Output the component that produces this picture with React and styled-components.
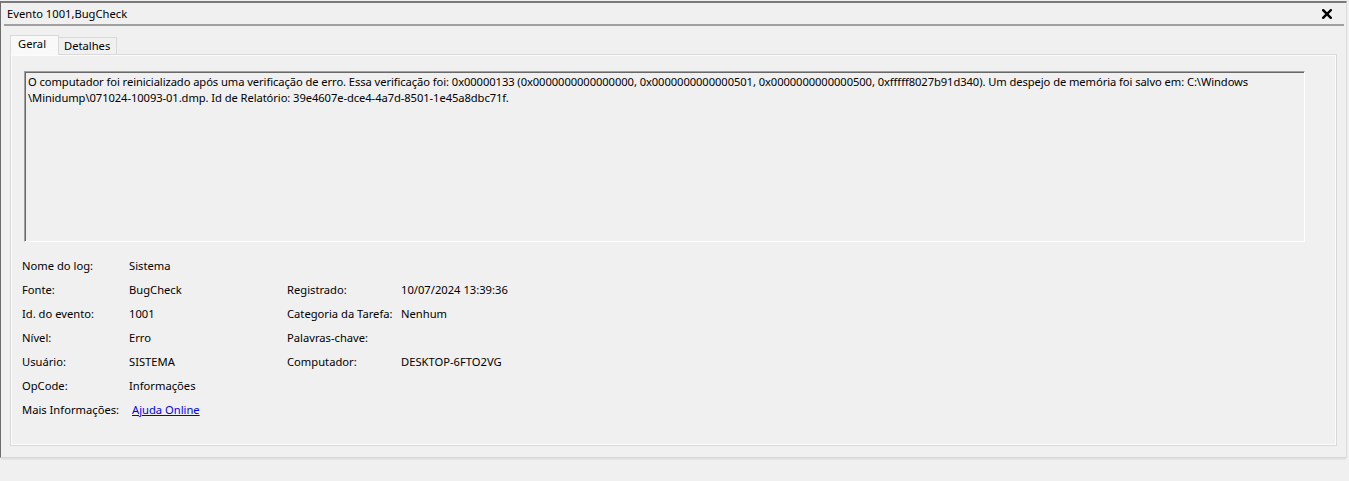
import React from "react";
import styled, { createGlobalStyle } from "styled-components";

const GlobalStyle = createGlobalStyle`
  html, body {
    margin: 0;
    padding: 0;
    background: #f0f0f0;
    font-family: "Noto Sans", "Open Sans", sans-serif;
    font-size: 11.2px;
    color: #000;
  }
`;

const Page = styled.div`
  width: 1349px;
  height: 481px;
  padding-top: 1px;
  box-sizing: border-box;
  background: #f0f0f0;
`;

const Window = styled.div`
  width: 1347px;
  height: 457px;
  box-sizing: border-box;
  border-top: 2px solid #7a7a7a;
  border-left: 1px solid #6d6d6d;
  border-right: 1px solid #dcdcdc;
  border-bottom: 1px solid #d4d4d4;
  box-shadow: 0 3px 0 -1px #e3e3e3;
  display: flex;
  flex-direction: column;
`;

const TitleBar = styled.div`
  height: 21px;
  display: flex;
  align-items: center;
  justify-content: space-between;
  padding: 0 12px 0 3px;
  border-bottom: 2px solid #a0a0a0;
  margin: 0 2px 0 3px;
`;

const Title = styled.span`
  white-space: nowrap;
  line-height: 16px;
`;

const CloseButton = styled.div`
  width: 10px;
  height: 10px;
  display: flex;
  svg {
    display: block;
  }
`;

const Body = styled.div`
  flex: 1;
  padding: 9px 9px 11px 9px;
  display: flex;
  flex-direction: column;
`;

const TabRow = styled.div`
  display: flex;
  align-items: flex-end;
  height: 20px;
  position: relative;
  z-index: 1;
  margin-bottom: -1px;
`;

const Tab = styled.div`
  box-sizing: border-box;
  height: ${(p) => (p.$active ? "20px" : "18px")};
  padding: ${(p) => (p.$active ? "0 12px 3px 7px" : "0 6px 1px 5px")};
  display: flex;
  align-items: center;
  background: ${(p) => (p.$active ? "#f9f9f9" : "#f0f0f0")};
  border: 1px solid #d9d9d9;
  border-bottom: ${(p) => (p.$active ? "1px solid #f9f9f9" : "1px solid #d9d9d9")};
  margin-left: ${(p) => (p.$active ? "0" : "-1px")};
  white-space: nowrap;
  line-height: 16px;
`;

const Panel = styled.div`
  flex: 1;
  box-sizing: border-box;
  border: 1px solid #d9d9d9;
  box-shadow: inset 0 0 0 1px #fbfbfb;
  background: #f0f0f0;
  padding: 16px 31px 0 13px;
  display: flex;
  flex-direction: column;
`;

const MessageBox = styled.div`
  height: 171px;
  box-sizing: border-box;
  border-style: solid;
  border-width: 1px;
  border-color: #a0a0a0 #ffffff #ffffff #a0a0a0;
  box-shadow: inset 1px 1px 0 #696969;
  padding: 2px 4px 0 3px;
  line-height: 16px;
  white-space: nowrap;
  letter-spacing: -0.08px;
`;

const Props = styled.div`
  display: grid;
  grid-template-columns: 107px 158px 114px auto;
  grid-auto-rows: 24px;
  margin: 12px 0 0 -2px;
  align-items: center;
  line-height: 16px;
`;

const Label = styled.div`
  white-space: nowrap;
`;

const Value = styled.div`
  white-space: nowrap;
  padding-left: ${(p) => (p.$shift ? "3px" : "0")};
`;

const Link = styled.a`
  color: #0000ee;
  text-decoration: underline;
  cursor: pointer;
`;

const rows = [
  ["Nome do log:", "Sistema", "", ""],
  ["Fonte:", "BugCheck", "Registrado:", "10/07/2024 13:39:36"],
  ["Id. do evento:", "1001", "Categoria da Tarefa:", "Nenhum"],
  ["Nível:", "Erro", "Palavras-chave:", ""],
  ["Usuário:", "SISTEMA", "Computador:", "DESKTOP-6FTO2VG"],
  ["OpCode:", "Informações", "", ""],
];

export default function App() {
  return (
    <Page>
      <GlobalStyle />
      <Window>
        <TitleBar>
          <Title>Evento 1001,BugCheck</Title>
          <CloseButton>
            <svg width="10" height="10" viewBox="0 0 10 10">
              <path d="M1.2 1.2 L8.8 8.8 M8.8 1.2 L1.2 8.8" stroke="#000" strokeWidth="2.4" strokeLinecap="square" />
            </svg>
          </CloseButton>
        </TitleBar>
        <Body>
          <TabRow>
            <Tab $active>Geral</Tab>
            <Tab>Detalhes</Tab>
          </TabRow>
          <Panel>
            <MessageBox>
              O computador foi reinicializado após uma verificação de erro. Essa verificação foi: 0x00000133 (0x0000000000000000, 0x0000000000000501, 0x0000000000000500, 0xfffff8027b91d340). Um despejo de memória foi salvo em: C:\Windows
              <br />
              \Minidump\071024-10093-01.dmp. Id de Relatório: 39e4607e-dce4-4a7d-8501-1e45a8dbc71f.
            </MessageBox>
            <Props>
              {rows.map((r, i) => (
                <React.Fragment key={i}>
                  <Label>{r[0]}</Label>
                  <Value>{r[1]}</Value>
                  <Label>{r[2]}</Label>
                  <Value>{r[3]}</Value>
                </React.Fragment>
              ))}
              <Label>Mais Informações:</Label>
              <Value $shift>
                <Link>Ajuda Online</Link>
              </Value>
            </Props>
          </Panel>
        </Body>
      </Window>
    </Page>
  );
}
